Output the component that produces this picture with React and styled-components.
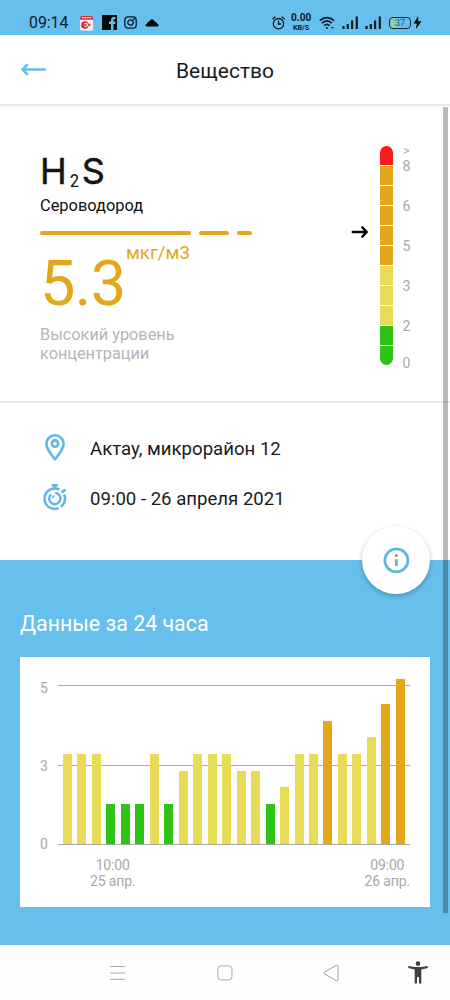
import * as React from 'react';
import styled, { createGlobalStyle } from 'styled-components';

const BLUE = '#66BFEC';
const ORANGE = '#E3A71A';
const YELLOW = '#E8DB55';
const GREEN = '#30C217';
const RED = '#FB1A1E';

const GlobalStyle = createGlobalStyle`
    * {
        box-sizing: border-box;
    }
    body {
        margin: 0;
        background-color: white;
        font-family: Roboto, "Liberation Sans", sans-serif;
        color: #1B1B1B;
    }
    svg {
        display: block;
        flex: none;
    }
`;

const Screen = styled.div`
    position: relative;
    display: flex;
    flex-direction: column;
    width: 450px;
    height: 1000px;
    overflow: hidden;
    background-color: white;
`;

const StatusBar = styled.div`
    display: flex;
    justify-content: space-between;
    height: 35px;
    padding: 10px 28px 0 29px;
    background-color: ${BLUE};
    color: #0D1B24;
`;

const StatusGroup = styled.div`
    display: flex;
    align-items: center;
    height: 25px;
`;

const Clock = styled.div`
    width: 50px;
    font-size: 15.8px;
    line-height: 25px;
`;

const Notifications = styled.div`
    display: flex;
    align-items: center;
    gap: 7.5px;
`;

const Speed = styled.div`
    width: 20px;
    margin: 0 8px 0 6px;
    font-size: 10px;
    font-weight: 700;
    line-height: 10px;
    text-align: center;
    white-space: nowrap;
`;

const SpeedUnit = styled.div`
    padding-top: 1px;
    font-size: 7.2px;
    line-height: 8px;
`;

const Signals = styled.div`
    display: flex;
    align-items: center;
    gap: 6px;
`;

const Battery = styled.div`
    width: 22px;
    height: 12px;
    margin: 0 2px 0 7px;
    border: 1.4px solid #15262F;
    border-radius: 4px;
    background: linear-gradient(to right, #8CCBB6 40%, transparent 40%);
    color: #34606A;
    font-size: 9.5px;
    line-height: 10px;
    text-align: center;
`;

const Header = styled.div`
    display: grid;
    grid-template-columns: 60px 1fr 60px;
    align-items: center;
    height: 71px;
    border-bottom: 2px solid #E9E9E9;
`;

const BackButton = styled.div`
    padding-left: 20px;
`;

const Title = styled.div`
    padding-top: 2px;
    font-size: 21px;
    text-align: center;
`;

const Summary = styled.div`
    display: flex;
    justify-content: space-between;
    height: 297px;
    padding: 39px 39px 0 40px;
    border-bottom: 2px solid #E9E9E9;
`;

const Substance = styled.div`
    display: flex;
    flex-direction: column;
`;

const Formula = styled.div`
    display: flex;
    height: 52px;
    font-family: Inter, "Liberation Sans", sans-serif;
    font-size: 36px;
    line-height: 52px;
    color: #161616;
    -webkit-text-stroke: 0.5px #161616;
    stroke-linejoin: round;
`;

const FormulaIndex = styled.div`
    width: 15px;
    padding: 10px 0 0 3px;
    font-family: "Roboto Condensed", Roboto, sans-serif;
    font-size: 19px;
    -webkit-text-stroke: 0;
    letter-spacing: 0;
`;

const SubstanceName = styled.div`
    height: 34px;
    font-size: 16.4px;
    line-height: 18px;
    color: #111;
`;

const Dashes = styled.div`
    display: flex;
    gap: 8px;
`;

const Dash = styled.div`
    width: ${({ $width }) => $width}px;
    height: 4px;
    border-radius: 2px;
    background-color: ${ORANGE};
`;

const Reading = styled.div`
    display: flex;
    height: 90px;
    color: ${ORANGE};
`;

const Value = styled.div`
    width: 86px;
    font-size: 63px;
    letter-spacing: -0.6px;
    line-height: 98px;
`;

const Unit = styled.div`
    padding-top: 7px;
    font-size: 18.7px;
    line-height: 22px;
`;

const Level = styled.div`
    font-size: 16.3px;
    line-height: 19px;
    color: #B5B5B5;
`;

const Gauge = styled.div`
    display: flex;
`;

const Pointer = styled.div`
    width: 29px;
    padding-top: 80px;
`;

const GaugeBar = styled.div`
    display: flex;
    flex-direction: column;
    gap: 1px;
    width: 13px;
    height: 219px;
    margin-top: 1px;
    border-radius: 7px;
    overflow: hidden;
`;

const Segment = styled.div`
    flex: 1;
    background-color: ${({ $color }) => $color};
`;

const GaugeLabels = styled.div`
    width: 9px;
    margin-left: 9px;
    font-size: 14px;
    color: #A8A8A8;
    text-align: center;
`;

const GaugeLabel = styled.div`
    height: ${({ $height }) => $height}px;
    line-height: 20px;
`;

const GaugeTop = styled.div`
    height: 11px;
    font-size: 13px;
    line-height: 11px;
`;

const Details = styled.div`
    position: relative;
    display: flex;
    flex-direction: column;
    gap: 10px;
    height: 157px;
    padding: 25px 40px 0 40px;
`;

const Detail = styled.div`
    display: flex;
    align-items: center;
    gap: 20px;
    height: 40px;
    font-size: 18.6px;
`;

const DetailText = styled.div`
    padding-top: 2px;
`;

const InfoButton = styled.div`
    position: absolute;
    right: 20px;
    bottom: -34px;
    display: flex;
    align-items: center;
    justify-content: center;
    width: 68px;
    height: 68px;
    border-radius: 50%;
    background-color: white;
    box-shadow: 0 2px 5px rgba(0, 0, 0, 0.25);
`;

const History = styled.div`
    height: 385px;
    padding: 50px 20px 0 20px;
    background-color: ${BLUE};
`;

const HistoryTitle = styled.div`
    height: 47px;
    font-size: 21.35px;
    line-height: 28px;
    color: white;
`;

const ChartCard = styled.div`
    height: 250px;
    padding: 20px 20px 0 20px;
    background-color: white;
    color: #A8A8A8;
    font-size: 14px;
`;

const ChartBody = styled.div`
    display: flex;
    height: 168px;
`;

const Axis = styled.div`
    display: flex;
    flex-direction: column;
    justify-content: space-between;
    width: 18px;
    height: 177px;
    padding-top: 1px;
    line-height: 20px;
`;

const Plot = styled.div`
    display: flex;
    align-items: flex-end;
    justify-content: space-between;
    width: 352px;
    padding: 0 5px 0 5px;
    border-bottom: 1px solid #A9A9A9;
    background:
        linear-gradient(#ABABAB, #ABABAB) 0 8px / 100% 1px no-repeat,
        linear-gradient(#ABABAB, #ABABAB) 0 88px / 100% 1px no-repeat;
`;

const Bar = styled.div`
    width: 9px;
    background-color: ${({ $color }) => $color};
`;

const Dates = styled.div`
    display: flex;
    justify-content: space-between;
    padding: 12px 0 0 50px;
    letter-spacing: -0.15px;
    line-height: 16px;
    text-align: center;
`;

const NavBar = styled.div`
    display: flex;
    align-items: center;
    height: 55px;
    padding-left: 109px;
    background-color: #FEFEFE;
`;

const NavItem = styled.div`
    width: ${({ $width }) => $width}px;
`;

const ScrollThumb = styled.div`
    position: absolute;
    top: 107px;
    right: 2px;
    width: 5px;
    height: 806px;
    background-color: rgba(0, 0, 0, 0.28);
`;

const CalendarIcon = () => (
    <svg width="15" height="16" viewBox="0 0 16 16">
        <rect x="1" y="4" width="14" height="12" rx="1.5" fill="#F3F1F1" />
        <path d="M2 0.5h12l1.5 4H0.5z" fill="#D5333F" />
        <path d="M3 2.3h10" stroke="#F7D5D8" strokeWidth="1.4" strokeDasharray="2 0.7" />
        <circle cx="6.3" cy="10" r="4" fill="#D92631" />
        <circle cx="7.3" cy="10" r="2.3" fill="#F3F1F1" />
        <circle cx="6.8" cy="10" r="1.3" fill="#D92631" />
        <circle cx="11.2" cy="10" r="1.1" fill="#D92631" />
    </svg>
);

const FacebookIcon = () => (
    <svg width="15" height="15" viewBox="0 0 15 15">
        <rect width="15" height="15" fill="#050A0D" />
        <path d="M9 15V9h-2V6.6h2V5c0-2 1.1-3 2.9-3h1.6v2.3h-1.1c-0.8 0-1 0.4-1 1v1.3h2.1L13.2 9h-1.8v6z" fill={BLUE} />
    </svg>
);

const InstagramIcon = () => (
    <svg width="13" height="13" viewBox="0 0 13 13" fill="none" stroke="#0D1B24" strokeWidth="1.3">
        <rect x="0.8" y="0.8" width="11.4" height="11.4" rx="3.2" />
        <circle cx="6.5" cy="6.5" r="2.7" />
        <circle cx="9.8" cy="3.2" r="0.4" />
    </svg>
);

const CloudIcon = () => (
    <svg width="14" height="9" viewBox="0 0 14 9">
        <path d="M1.5 8.5C0.2 8.2 0 6.4 1.8 5.8C2.3 3.8 3.6 3.4 4.4 3.4C5.3 0.5 8.8 0.3 9.9 3.8C11.6 3.9 12 5 12.1 5.7C14 6 14.2 8.2 12.8 8.5z" fill="#050A0D" />
    </svg>
);

const AlarmIcon = () => (
    <svg width="13" height="14" viewBox="0 0 13 14" fill="none" stroke="#0D1B24" strokeWidth="1.3" strokeLinecap="round">
        <circle cx="6.5" cy="7.7" r="5.2" />
        <path d="M6.5 5v3h2.2M0.8 2.8L3 1M12.2 2.8L10 1" />
    </svg>
);

const WifiIcon = () => (
    <svg width="17" height="14" viewBox="0 0 17 14" fill="none" stroke="#0D1B24" strokeWidth="1.7">
        <path d="M0.8 4.6C5 0.6 10.8 0.6 15 4.6M3 7.2C6 4.3 9.8 4.3 12.8 7.2M5.2 9.7C7 8 8.8 8 10.6 9.7" />
        <circle cx="7.9" cy="12" r="1" fill="#0D1B24" stroke="none" />
        <path d="M12 11l1.4 1.8L14.8 11z" fill="#0D1B24" stroke="none" />
    </svg>
);

const SignalIcon = () => (
    <svg width="17" height="13" viewBox="0 0 17 13" fill="none" stroke="#0D1B24" strokeWidth="2.2">
        <path d="M1.5 13v-3M5.8 13V8M10.1 13V4.5M14.8 13V0.5" />
    </svg>
);

const BoltIcon = () => (
    <svg width="9" height="13" viewBox="0 0 9 13">
        <path d="M5.3 0L0.6 7.4H3.7L3 13L8.4 5.2H5.1z" fill="#050A0D" />
    </svg>
);

const BackIcon = () => (
    <svg width="28" height="14" viewBox="0 0 28 14" fill="none" stroke={BLUE} strokeWidth="2.6" strokeLinecap="round" strokeLinejoin="round">
        <path d="M24.8 6.5H3M7 2L2.5 6.5L7 11" />
    </svg>
);

const PointerIcon = () => (
    <svg width="18" height="14" viewBox="0 0 18 14" fill="none" stroke="#0A0A0A" strokeWidth="2.5" strokeLinecap="round" strokeLinejoin="round">
        <path d="M1.8 7H15.5M11.3 2.4L15.8 7L11.3 11.6" />
    </svg>
);

const PinIcon = () => (
    <svg width="30" height="30" viewBox="0 0 30 30" fill="none" stroke="#61B7E2" strokeWidth="2.6" strokeLinejoin="round">
        <path d="M15 26.3C12 22.5 6.4 16.5 6.4 10.8A8.6 8.6 0 0 1 23.6 10.8C23.6 16.5 18 22.5 15 26.3z" />
        <circle cx="15" cy="10.6" r="3.2" />
    </svg>
);

const StopwatchIcon = () => (
    <svg width="30" height="30" viewBox="0 0 30 30" fill="none" stroke="#61B7E2" strokeWidth="2.5">
        <path d="M18.6 25.1A10.2 10.2 0 1 1 19.4 6.6" />
        <path d="M20.6 23.9A10.2 10.2 0 0 0 24.2 11.4" />
        <path d="M21.6 9.4L25.4 6.6" strokeWidth="3" />
        <path d="M14.8 6V2.8M11.8 2.2h6" />
        <path d="M11.1 11.4A5.6 5.6 0 1 0 15.2 10" />
        <path d="M12.2 15.4A2.8 2.8 0 0 1 15 12.8" strokeWidth="1.2" />
    </svg>
);

const InfoIcon = () => (
    <svg width="28" height="28" viewBox="0 0 28 28" fill="none" stroke="#62B7E1" strokeWidth="2.8">
        <circle cx="14.4" cy="14.4" r="11.5" />
        <path d="M14.4 13.2v6.8" />
        <circle cx="14.4" cy="9.6" r="1.5" fill="#8B9299" stroke="none" />
    </svg>
);

const MenuIcon = () => (
    <svg width="17" height="16" viewBox="0 0 17 16" stroke="#A9A9A9">
        <path d="M1 1.5h15M1 8h15M1 14.3h15" />
    </svg>
);

const HomeIcon = () => (
    <svg width="16" height="16" viewBox="0 0 16 16" fill="none" stroke="#A9A9A9">
        <rect x="0.8" y="0.8" width="14.2" height="14.2" rx="3.5" />
    </svg>
);

const PreviousIcon = () => (
    <svg width="16" height="18" viewBox="0 0 16 18" fill="none" stroke="#A0A0A0" strokeLinejoin="round">
        <path d="M13.3 1.3L1.7 8Q0.3 9 1.7 10L13.3 16.7Q15 17.3 15 15.7V2.3Q15 0.7 13.3 1.3z" />
    </svg>
);

const AccessibilityIcon = () => (
    <svg width="20" height="23" viewBox="0 0 20 23" fill="#3F3F3F">
        <circle cx="10" cy="2.6" r="2.3" />
        <path d="M0.5 5L6.5 6.1H13.5L19.5 5L19.8 6.9L13.3 8.4V22.5H11V16H9V22.5H6.7V8.4L0.2 6.9z" />
    </svg>
);

const segments = [RED, ORANGE, ORANGE, ORANGE, ORANGE, ORANGE, YELLOW, YELLOW, YELLOW, GREEN, GREEN];

const gaugeLabels = [
    [8, 40],
    [6, 40],
    [5, 40],
    [3, 40],
    [2, 37],
    [0, 20],
];

// bar heights in pixels, one per hour
const hours = [
    90, 90, 90, 40, 40, 40, 90, 40, 73, 90, 90, 90,
    73, 73, 40, 57, 90, 90, 123, 90, 90, 107, 140, 165,
];

const barColor = (height) => {
    if (height > 110) return ORANGE;
    return height > 50 ? YELLOW : GREEN;
};

const Status = () => (
    <StatusBar>
        <StatusGroup>
            <Clock>09:14</Clock>
            <Notifications>
                <CalendarIcon />
                <FacebookIcon />
                <InstagramIcon />
                <CloudIcon />
            </Notifications>
        </StatusGroup>
        <StatusGroup>
            <AlarmIcon />
            <Speed>
                0.00
                <SpeedUnit>KB/S</SpeedUnit>
            </Speed>
            <Signals>
                <WifiIcon />
                <SignalIcon />
                <SignalIcon />
            </Signals>
            <Battery>37</Battery>
            <BoltIcon />
        </StatusGroup>
    </StatusBar>
);

const App = () => (
    <Screen>
        <GlobalStyle />
        <Status />
        <Header>
            <BackButton>
                <BackIcon />
            </BackButton>
            <Title>Вещество</Title>
        </Header>
        <Summary>
            <Substance>
                <Formula>
                    H<FormulaIndex>2</FormulaIndex>S
                </Formula>
                <SubstanceName>Сероводород</SubstanceName>
                <Dashes>
                    <Dash $width={151} />
                    <Dash $width={30} />
                    <Dash $width={15} />
                </Dashes>
                <Reading>
                    <Value>5.3</Value>
                    <Unit>мкг/м3</Unit>
                </Reading>
                <Level>
                    Высокий уровень
                    <br />
                    концентрации
                </Level>
            </Substance>
            <Gauge>
                <Pointer>
                    <PointerIcon />
                </Pointer>
                <GaugeBar>
                    {segments.map((color, i) => (
                        <Segment key={i} $color={color} />
                    ))}
                </GaugeBar>
                <GaugeLabels>
                    <GaugeTop>&gt;</GaugeTop>
                    {gaugeLabels.map(([label, height]) => (
                        <GaugeLabel key={label} $height={height}>{label}</GaugeLabel>
                    ))}
                </GaugeLabels>
            </Gauge>
        </Summary>
        <Details>
            <Detail>
                <PinIcon />
                <DetailText>Актау, микрорайон 12</DetailText>
            </Detail>
            <Detail>
                <StopwatchIcon />
                <DetailText>09:00 - 26 апреля 2021</DetailText>
            </Detail>
            <InfoButton>
                <InfoIcon />
            </InfoButton>
        </Details>
        <History>
            <HistoryTitle>Данные за 24 часа</HistoryTitle>
            <ChartCard>
                <ChartBody>
                    <Axis>
                        <div>5</div>
                        <div>3</div>
                        <div>0</div>
                    </Axis>
                    <Plot>
                        {hours.map((height, i) => (
                            <Bar key={i} $color={barColor(height)} style={{ height }} />
                        ))}
                    </Plot>
                </ChartBody>
                <Dates>
                    <div>10:00<br />25 апр.</div>
                    <div>09:00<br />26 апр.</div>
                </Dates>
            </ChartCard>
        </History>
        <NavBar>
            <NavItem $width={108}><MenuIcon /></NavItem>
            <NavItem $width={106}><HomeIcon /></NavItem>
            <NavItem $width={85}><PreviousIcon /></NavItem>
            <AccessibilityIcon />
        </NavBar>
        <ScrollThumb />
    </Screen>
);

export default App;
